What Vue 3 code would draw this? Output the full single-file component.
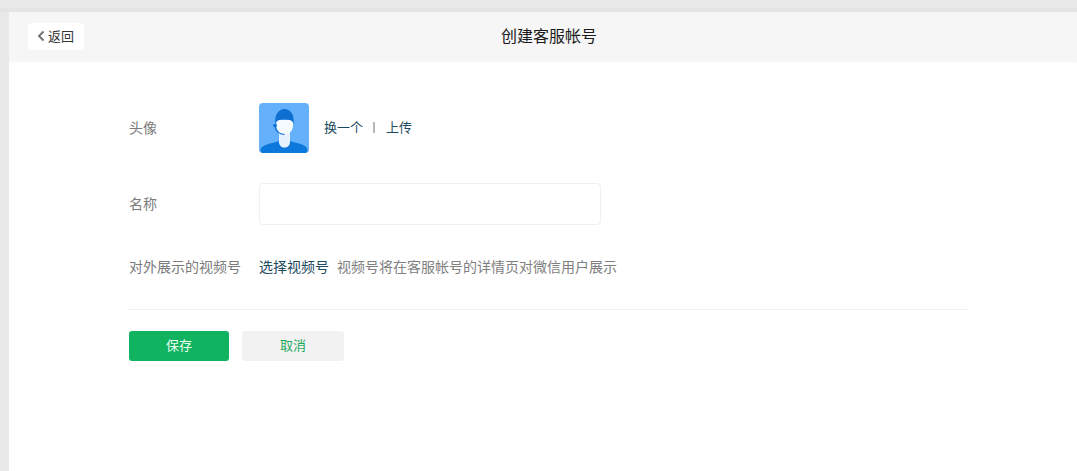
<script setup>
</script>

<template>
  <div class="page">
    <div class="card">
      <header class="head">
        <button class="back"><svg class="chev" width="8" height="12" viewBox="0 0 8 12"><path d="M6.500 1.500 2 6l4.500 4.500" fill="none" stroke="#6e6e6e" stroke-width="1.800"/></svg>返回</button>
        <h1 class="title">创建客服帐号</h1>
      </header>
      <main class="form">
        <div class="row avatar-row">
          <label class="label">头像</label>
          <div class="value">
            <svg class="avatar" width="50" height="50" viewBox="0 0 50 50">
              <rect width="50" height="50" rx="4" fill="#64b0fb"/>
              <path d="M1.500 47C2 44 4 43 8 41.500C12 40 16 39.500 20 38H31C35 39.500 39 40 43 41.500C46 43 48 44 48.500 47C48.500 49 47.500 50 46 50H4C2.500 50 1.500 49 1.500 47Z" fill="#0d78db"/>
              <path d="M20 26H31V39C31 42.500 28.500 44.500 25.500 44.500S20 42.500 20 39Z" fill="#e6f3fe"/>
              <path d="M17.500 17H34V23C34 28 30 31 25.700 31S17.500 28 17.500 23Z" fill="#f6fbff"/>
              <path d="M16.500 21C15 11.500 20 6 25.500 6S36 11.500 34.500 21C33.500 17.500 31.500 16.500 25.500 16.500S17.500 17.500 16.500 21Z" fill="#0d6fd0"/>
              <path d="M16 23C16.500 27.500 20 31 25.500 31.500" fill="none" stroke="#0d6fd0" stroke-width="1.200"/>
              <circle cx="16" cy="22.500" r="1.800" fill="#0d6fd0"/>
            </svg>
            <a class="link small change">换一个</a><span class="sep"></span><a class="link small">上传</a>
          </div>
        </div>
        <div class="row name-row">
          <label class="label">名称</label>
          <div class="value"><input class="input" /></div>
        </div>
        <div class="row channel-row">
          <label class="label">对外展示的视频号</label>
          <div class="value"><a class="link">选择视频号</a><span class="tip">视频号将在客服帐号的详情页对微信用户展示</span></div>
        </div>
        <div class="actions">
          <button class="btn primary">保存</button>
          <button class="btn plain">取消</button>
        </div>
      </main>
    </div>
  </div>
</template>

<style>
html, body { margin: 0; background: #e9e9e9; overflow: hidden; }
</style>

<style scoped>
.page {
  width: 1077px;
  height: 471px;
  box-sizing: border-box;
  padding: 12px 0 0 9px;
  background: linear-gradient(#e8e8e8 8px, #e4e4e4 8px, #e4e4e4 12px, #e9e9e9 12px);
  font-family: "Liberation Sans", "Noto Sans CJK SC", sans-serif;
  font-size: 14px;
}
.card { height: 459px; background: #fff; }
.head {
  height: 51px;
  box-sizing: border-box;
  padding: 0 0 5px 12px;
  background: linear-gradient(#f6f6f6 48px, #fbfbfb 51px);
  position: relative;
  display: flex;
  align-items: center;
  justify-content: center;
}
.back {
  position: absolute;
  left: 19px;
  top: 11px;
  width: 56px;
  height: 27px;
  padding: 0 0 3px 9px;
  border: 0;
  border-radius: 4px;
  background: #fff;
  color: #333;
  font: inherit;
  font-size: 13px;
  display: flex;
  align-items: center;
  gap: 3px;
}
.chev { flex: none; margin-top: 1px; }
.title { margin: 0; font-size: 16px; font-weight: 400; color: #1a1a1a; }
.form { padding: 40px 108px 0 120px; }
.row { display: flex; align-items: center; }
.label { width: 130px; color: #7b7b7b; flex: none; padding-bottom: 2px; }
.value { display: flex; align-items: center; }
.avatar { display: block; margin-right: 15px; }
.name-row { margin-top: 30px; }
.channel-row { margin-top: 31px; }
.link { color: #1c4a5e; cursor: pointer; }
.small { font-size: 13px; padding-bottom: 4px; }
.sep { width: 2px; height: 11px; background: #b4b8b8; margin: 0 11px 2px 10px; }
.input {
  width: 342px;
  height: 42px;
  box-sizing: border-box;
  border: 1px solid #f0f0f0;
  border-radius: 4px;
  background: #fff;
  outline: none;
}
.channel-row .value { padding-bottom: 2px; }
.tip { margin-left: 8px; color: #808080; }
.actions {
  margin-top: 31px;
  border-top: 1px solid #f0f0f0;
  padding-top: 21px;
  display: flex;
  gap: 13px;
}
.btn { height: 30px; border: 0; border-radius: 3px; font: inherit; font-size: 13px; padding: 0 0 4px; }
.primary { width: 100px; background: #10b35f; color: #eafff3; }
.plain { width: 102px; background: #f2f2f2; color: #1eaa5c; }
</style>
